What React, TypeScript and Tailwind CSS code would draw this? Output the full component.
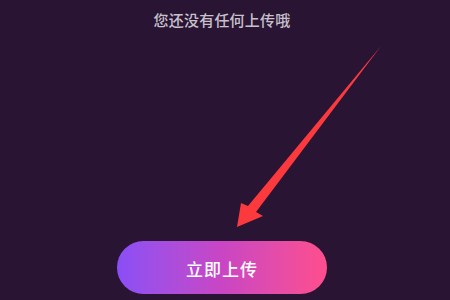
export default function App() {
  return (
    <div
      className="relative w-[450px] h-[300px] overflow-hidden bg-[#2a1434] flex flex-col items-center justify-between pt-[11px] pb-[6px] pr-[6px]"
      style={{ fontFamily: '"Noto Sans CJK SC", "Noto Sans", sans-serif' }}
    >
      <p className="text-[15px] leading-[18px] text-[#c6c1cb] tracking-[0.2px] font-medium">
        您还没有任何上传哦
      </p>

      {/* arrow */}
      <svg
        className="absolute inset-0 pointer-events-none"
        width="450"
        height="300"
        viewBox="0 0 450 300"
      >
        <polygon
          points="381,46 256,212 263,216 237,227 241,203 248,206"
          fill="#fc3a3d"
        />
      </svg>

      <button className="w-[210px] h-[53px] rounded-full bg-gradient-to-r from-[#8a4ef6] via-[#c945c4] to-[#ff4d8c] text-white text-[17px] font-medium tracking-[1px] flex items-center justify-center pt-[3px]">
        立即上传
      </button>
    </div>
  );
}
